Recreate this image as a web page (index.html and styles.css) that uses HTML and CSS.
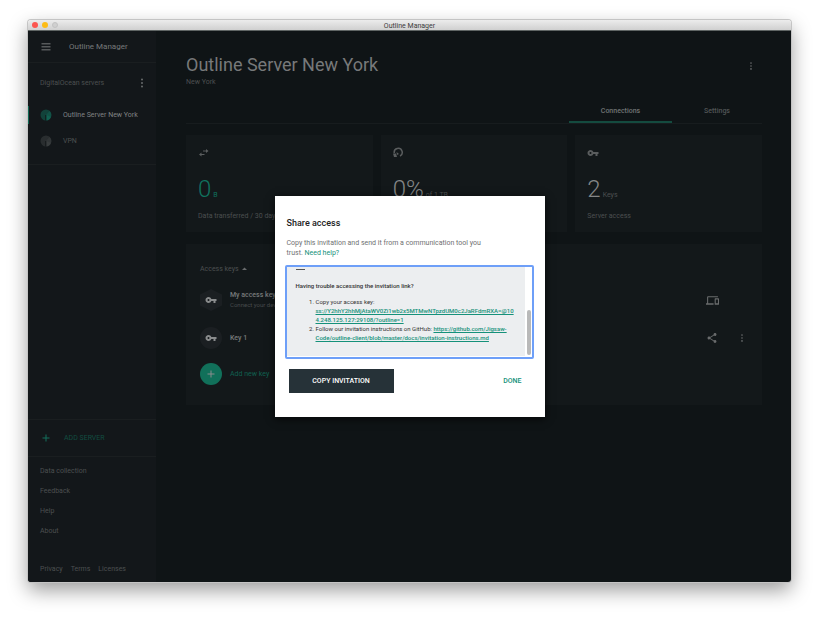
FILE: index.html
```html
<!DOCTYPE html>
<html lang="en">
<head>
<meta charset="utf-8">
<title>Outline Manager</title>
<link rel="stylesheet" href="styles.css">
</head>
<body>
<svg class="defs" aria-hidden="true">
  <symbol id="more" viewBox="0 0 24 24"><circle cx="12" cy="5" r="2"/><circle cx="12" cy="12" r="2"/><circle cx="12" cy="19" r="2"/></symbol>
  <symbol id="key" viewBox="0 0 24 24"><path d="M12.650 10C11.830 7.670 9.610 6 7 6c-3.310 0-6 2.690-6 6s2.690 6 6 6c2.610 0 4.830-1.670 5.650-4H17v4h4v-4h2v-4H12.650zM7 14c-1.100 0-2-.9-2-2s.9-2 2-2 2 .9 2 2-.9 2-2 2z"/></symbol>
  <symbol id="plus" viewBox="0 0 24 24"><path d="M19 13h-6v6h-2v-6H5v-2h6V5h2v6h6v2z"/></symbol>
  <symbol id="server" viewBox="0 0 24 24"><circle cx="12" cy="12" r="11" opacity=".4"/><path d="M12 12l7-8a11 11 0 0 1-7 19z" opacity=".25"/><path d="M13 12l9 4a11 11 0 0 1-9 7z" opacity=".3"/><path class="hand" d="M10.500 12h2v11h-2z"/></symbol>
</svg>
<div class="window">
  <header class="titlebar">
    <span class="lights"><i class="light close"></i><i class="light minimize"></i><i class="light idle"></i></span>
    <span>Outline Manager</span>
  </header>
  <div class="app">
    <aside class="sidebar">
      <div class="brand">
        <button class="icon-button" aria-label="Menu"><svg class="icon" viewBox="0 0 24 24"><path d="M3 4h18v3H3zm0 6h18v3H3zm0 6h18v3H3z"/></svg></button>
        <span>Outline Manager</span>
      </div>
      <section class="servers">
        <div class="servers-head">
          <span>DigitalOcean servers</span>
          <button class="icon-button" aria-label="Account options"><svg class="icon"><use href="#more"/></svg></button>
        </div>
        <a class="server active" href="#ny"><svg class="icon"><use href="#server"/></svg>Outline Server New York</a>
        <a class="server" href="#vpn"><svg class="icon"><use href="#server"/></svg>VPN</a>
      </section>
      <button class="add-server"><svg class="icon"><use href="#plus"/></svg>ADD SERVER</button>
      <nav class="links">
        <a href="#data">Data collection</a>
        <a href="#feedback">Feedback</a>
        <a href="#help">Help</a>
        <a href="#about">About</a>
      </nav>
      <nav class="legal">
        <a href="#privacy">Privacy</a>
        <a href="#terms">Terms</a>
        <a href="#licenses">Licenses</a>
      </nav>
    </aside>
    <main class="main">
      <div class="page-head">
        <div>
          <h1>Outline Server New York</h1>
          <p>New York</p>
        </div>
        <button class="icon-button" aria-label="Server options"><svg class="icon"><use href="#more"/></svg></button>
      </div>
      <div class="tabs" role="tablist">
        <button class="tab selected" role="tab" aria-selected="true">Connections</button>
        <button class="tab" role="tab" aria-selected="false">Settings</button>
      </div>
      <div class="cards">
        <section class="card transfer">
          <svg class="icon" viewBox="0 0 24 24"><path d="M7 11l-5 4 5 4v-3h6v-2H7zM21 8l-5-4v3h-6v2h6v3z"/></svg>
          <div class="stat"><strong>0</strong><span>B</span></div>
          <p>Data transferred / 30 days</p>
        </section>
        <section class="card">
          <svg class="icon" viewBox="0 0 24 24"><path class="ring" d="M2.500 12A8 8 0 1 1 14 18"/><path d="M0 13h6l2 7H2zM7 10l5 4-4 2z"/></svg>
          <div class="stat"><strong>0%</strong><span>of 1 TB</span></div>
          <p>Allowance used</p>
        </section>
        <section class="card">
          <svg class="icon"><use href="#key"/></svg>
          <div class="stat"><strong>2</strong><span>Keys</span></div>
          <p>Server access</p>
        </section>
      </div>
      <section class="keys">
        <button class="keys-head">Access keys<svg class="caret" viewBox="0 0 10 6"><path d="M0 6l5-5 5 5z"/></svg></button>
        <div class="key">
          <span class="badge hexagon"><svg class="icon"><use href="#key"/></svg></span>
          <div class="key-name"><b>My access key</b><small>Connect your device</small></div>
          <button class="icon-button" aria-label="Connect this device"><svg class="icon large" viewBox="0 0 24 24"><path d="M4 6h18V4H4c-1.100 0-2 .9-2 2v11H0v3h14v-3H4V6zm19 2h-6c-.55 0-1 .45-1 1v10c0 .55.45 1 1 1h6c.55 0 1-.45 1-1V9c0-.55-.45-1-1-1zm-1 9h-4v-7h4v7z"/></svg></button>
        </div>
        <div class="key">
          <span class="badge"><svg class="icon"><use href="#key"/></svg></span>
          <div class="key-name"><b>Key 1</b></div>
          <button class="icon-button" aria-label="Share Key 1"><svg class="icon" viewBox="0 0 24 24"><path d="M18 16.080c-.76 0-1.440.3-1.960.77L8.910 12.700c.05-.23.09-.46.09-.7s-.04-.47-.09-.7l7.050-4.110c.54.5 1.250.81 2.040.81 1.660 0 3-1.340 3-3s-1.340-3-3-3-3 1.340-3 3c0 .24.04.47.09.7L8.040 9.810C7.500 9.310 6.790 9 6 9c-1.660 0-3 1.340-3 3s1.340 3 3 3c.79 0 1.500-.31 2.040-.81l7.120 4.160c-.05.21-.08.43-.08.65 0 1.610 1.310 2.920 2.920 2.920s2.920-1.310 2.920-2.920-1.310-2.920-2.920-2.920z"/></svg></button>
          <button class="icon-button key-menu" aria-label="Key 1 options"><svg class="icon"><use href="#more"/></svg></button>
        </div>
        <button class="key add-key"><span class="badge"><svg class="icon"><use href="#plus"/></svg></span><span>Add new key</span></button>
      </section>
    </main>
    <div class="overlay">
      <div class="dialog" role="dialog" aria-labelledby="share-title">
        <h2 id="share-title">Share access</h2>
        <p>Copy this invitation and send it from a communication tool you trust. <a href="#why">Need help?</a></p>
        <div class="invitation" tabindex="0">
          <div class="message">
            <hr>
            <h3>Having trouble accessing the invitation link?</h3>
            <ol>
              <li>Copy your access key: <a href="#key-link">ss://Y2hhY2hhMjAtaWV0Zi1wb2x5MTMwNTpzdUM0c2JaRFdmRXA=@104.248.125.127:29108/?outline=1</a></li>
              <li>Follow our invitation instructions on GitHub: <a href="#instructions">https://github.com/Jigsaw-Code/outline-client/blob/master/docs/invitation-instructions.md</a></li>
            </ol>
          </div>
          <div class="scroll"><i></i></div>
        </div>
        <div class="actions">
          <button class="copy">COPY INVITATION</button>
          <button class="done">DONE</button>
        </div>
      </div>
    </div>
  </div>
</div>
</body>
</html>
```

FILE: styles.css
```css
* { box-sizing: border-box; }
body {
  margin: 0;
  min-height: 100vh;
  padding: 20px 28px 37px;
  display: flex;
  background: #fff;
  color: #4c4f50;
  font: 7px/10px Roboto, sans-serif;
}
h1, h2, h3, p, ol { margin: 0; }
button { font: inherit; color: inherit; background: none; border: 0; padding: 0; }
a { color: inherit; text-decoration: none; }
.defs { position: absolute; width: 0; height: 0; }
.icon { display: block; flex: none; width: 12px; height: 12px; fill: currentColor; }
.icon-button { display: grid; place-items: center; width: 12px; height: 12px; color: #696b6c; }

.window {
  flex: 1;
  display: flex;
  flex-direction: column;
  border-radius: 3px;
  overflow: hidden;
  box-shadow: 0 0 0 1px #c4c4c4, 0 8px 20px rgba(0, 0, 0, .4);
}
.titlebar {
  position: relative;
  display: flex;
  justify-content: center;
  height: 11px;
  line-height: 12px;
  color: #3c3c3c;
  background: linear-gradient(#ececec, #d0d0d0);
  border-bottom: 1px solid #5f6564;
}
.lights { position: absolute; left: 4px; top: 2px; display: flex; gap: 4px; }
.light { width: 6px; height: 6px; border-radius: 50%; }
.close { background: #fc5650; }
.minimize { background: #fdbc16; }
.idle { background: #d0d0d0; border: 1px solid #c2c2c2; }

.app { position: relative; flex: 1; display: grid; grid-template-columns: 128px 1fr; background: #0f1416; }
.sidebar { display: flex; flex-direction: column; background: #13171a; }
.brand {
  display: flex;
  align-items: center;
  gap: 17px;
  height: 32px;
  padding: 1px 0 0 12px;
  border-bottom: 1px solid #1a1e20;
  font-size: 8px;
  color: #777a7b;
}
.brand .icon-button { color: #56595a; }
.servers { flex: 1; display: flex; flex-direction: column; }
.servers-head { display: flex; justify-content: space-between; align-items: center; padding: 14px 8px 17px 12px; }
.server { display: flex; align-items: center; gap: 11px; height: 18px; margin-bottom: 8px; padding-left: 12px; }
.active { color: #808384; box-shadow: inset 1px 0 #0e6753; }
.active .icon { color: #12856c; }
.hand { fill: #13171a; }
.servers::after { content: ""; border-top: 1px solid #1a1e20; margin-top: 6px; }
.add-server {
  display: flex;
  align-items: center;
  gap: 12px;
  height: 38px;
  padding-left: 12px;
  border: solid #1a1e20;
  border-width: 1px 0;
  color: #124d41;
}
.add-server .icon { color: #14705c; }
.links { display: flex; flex-direction: column; gap: 10px; padding: 9px 12px 28px; }
.legal { display: flex; gap: 8px; padding: 0 12px 8px; }

.main { padding: 22px 29px 0 30px; }
.page-head { display: flex; justify-content: space-between; padding-right: 5px; }
.page-head .icon-button { margin-top: 7px; }
.page-head .icon, .key-menu .icon { width: 10px; height: 10px; }
h1 { font-size: 18px; line-height: 24px; font-weight: 400; color: #77797a; }
.tabs { display: flex; justify-content: flex-end; margin-top: 12px; border-bottom: 1px solid #171c1e; }
.tab { width: 103px; height: 24px; color: #525657; font-weight: 500; }
.tab:last-child { width: 90px; }
.selected { color: #717475; box-shadow: inset 0 -2px #144b3f; }
.cards { display: grid; grid-template-columns: repeat(3, 1fr); gap: 8px; margin-top: 11px; }
.card, .keys { background: #13181a; }
.card { height: 97px; padding: 12px; }
.card > .icon { color: #5a5d5e; }
.ring { fill: none; stroke: currentColor; stroke-width: 3; }
.stat { display: flex; align-items: baseline; gap: 2px; margin: 16px 0 2px; line-height: 28px; }
.stat strong { font-size: 24px; font-weight: 300; color: #848687; }
.transfer .stat, .transfer strong { color: #10725e; }
.keys { margin-top: 12px; padding: 16px 14px 14px; }
.keys-head { display: flex; align-items: center; gap: 3px; height: 17px; }
.caret { width: 5px; height: 3px; fill: #696b6c; }
.key {
  display: grid;
  grid-template-columns: 22px 1fr 16px 20px;
  align-items: center;
  column-gap: 8px;
  width: 100%;
  height: 38px;
  text-align: left;
}
.key .icon-button { justify-self: center; }
.key .key-menu { justify-self: end; }
.keys-head + .key { margin-top: 4px; }
.large { width: 13px; height: 13px; }
.badge { display: grid; place-items: center; width: 22px; height: 22px; border-radius: 50%; background: #1b1f22; color: #8a8c8d; }
.hexagon { border-radius: 0; clip-path: polygon(50% 0, 100% 25%, 100% 75%, 50% 100%, 0 75%, 0 25%); }
.key-name { display: grid; color: #777a7b; }
.key-name b { font-weight: 500; line-height: 9px; }
.key-name small { font-size: 6px; line-height: 9px; color: #484b4c; }
.add-key { height: 34px; color: #116050; }
.add-key .badge { background: #11705a; }

.overlay { position: absolute; inset: 0; display: grid; place-items: center; }
.dialog {
  width: 270px;
  padding: 21px 11px 24px 10px;
  background: #fff;
  box-shadow: 0 2px 8px rgba(0, 0, 0, .7);
  color: #6f7172;
}
.dialog h2 { margin: 0 2px 9px; font-size: 9px; line-height: 12px; font-weight: 500; color: #222; }
.dialog p { width: 204px; margin: 0 2px 7px; }
.dialog a { color: #15917a; }
.invitation { display: flex; height: 94px; border: 2px solid #6e9ff8; border-radius: 2px; background: #fff; outline: 0; }
.message { flex: 1; min-width: 0; height: 89px; padding: 1px 10px 0 9px; background: #eceef0; color: #333; font-size: 6px; line-height: 9px; }
.message hr { width: 9px; height: 1px; margin: 1px 0 11px; border: 0; background: #555; }
.message h3 { margin-bottom: 7px; font-size: 6px; line-height: 9px; font-weight: 500; }
.message ol { padding-left: 20px; }
.message li { overflow-wrap: anywhere; }
.message a { text-decoration: underline; font-weight: 500; }
.message li:first-child a { display: block; word-break: break-all; }
.scroll { width: 7px; padding: 43px 1px 2px 2px; display: flex; }
.scroll i { flex: 1; border-radius: 2px; background: #b9b9b9; }
.actions { display: flex; justify-content: space-between; align-items: center; margin-top: 10px; padding: 0 12px 0 4px; font-weight: 500; }
.copy { width: 105px; height: 24px; background: #263238; color: #fff; }
.done { color: #15917a; }
```
